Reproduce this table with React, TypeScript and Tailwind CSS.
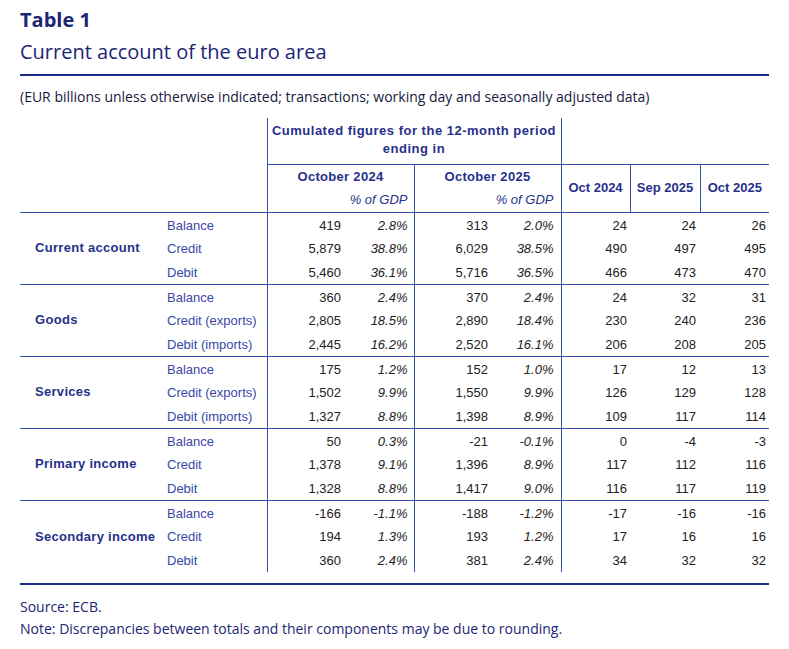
import React from "react";

type Row = [string, string, string, string, string, string, string, string];

const groups: { name: string; rows: Row[] }[] = [
  {
    name: "Current account",
    rows: [
      ["Balance", "419", "2.8%", "313", "2.0%", "24", "24", "26"],
      ["Credit", "5,879", "38.8%", "6,029", "38.5%", "490", "497", "495"],
      ["Debit", "5,460", "36.1%", "5,716", "36.5%", "466", "473", "470"],
    ],
  },
  {
    name: "Goods",
    rows: [
      ["Balance", "360", "2.4%", "370", "2.4%", "24", "32", "31"],
      ["Credit (exports)", "2,805", "18.5%", "2,890", "18.4%", "230", "240", "236"],
      ["Debit (imports)", "2,445", "16.2%", "2,520", "16.1%", "206", "208", "205"],
    ],
  },
  {
    name: "Services",
    rows: [
      ["Balance", "175", "1.2%", "152", "1.0%", "17", "12", "13"],
      ["Credit (exports)", "1,502", "9.9%", "1,550", "9.9%", "126", "129", "128"],
      ["Debit (imports)", "1,327", "8.8%", "1,398", "8.9%", "109", "117", "114"],
    ],
  },
  {
    name: "Primary income",
    rows: [
      ["Balance", "50", "0.3%", "-21", "-0.1%", "0", "-4", "-3"],
      ["Credit", "1,378", "9.1%", "1,396", "8.9%", "117", "112", "116"],
      ["Debit", "1,328", "8.8%", "1,417", "9.0%", "116", "117", "119"],
    ],
  },
  {
    name: "Secondary income",
    rows: [
      ["Balance", "-166", "-1.1%", "-188", "-1.2%", "-17", "-16", "-16"],
      ["Credit", "194", "1.3%", "193", "1.2%", "17", "16", "16"],
      ["Debit", "360", "2.4%", "381", "2.4%", "34", "32", "32"],
    ],
  },
];

const line = "border-[#3550a8]";

export default function App() {
  return (
    <div className="w-[789px] h-[649px] bg-white px-5 pt-[7px] font-['Open_Sans',sans-serif]">
      {/* Title */}
      <h1 className="text-[20px] leading-[26px] font-bold text-[#1c2674]">Table 1</h1>
      <h2 className="text-[20px] leading-[26px] mt-[6px] text-[#1c2674]">Current account of the euro area</h2>
      <div className="h-[2px] bg-[#1c2a8c] mt-[9px]" />
      <p className="text-[14px] leading-[18px] mt-[12px] text-[#161840]">
        (EUR billions unless otherwise indicated; transactions; working day and seasonally adjusted data)
      </p>

      {/* Table */}
      <table className="mt-[12px] w-[749px] table-fixed border-collapse font-['Liberation_Sans',Arial,sans-serif] text-[13px]">
        <colgroup>
          <col className="w-[140px]" />
          <col className="w-[107px]" />
          <col className="w-[78px]" />
          <col className="w-[69px]" />
          <col className="w-[78px]" />
          <col className="w-[69px]" />
          <col className="w-[69px]" />
          <col className="w-[70px]" />
          <col className="w-[69px]" />
        </colgroup>
        <thead className="font-bold text-[#27308a]">
          <tr className="h-[46px]">
            <th colSpan={2} />
            <th colSpan={4} className={`border-l border-r ${line} leading-[18px] px-1 pb-[2px] align-middle tracking-[0.5px]`}>
              Cumulated figures for the 12-month period
              <br />
              ending in
            </th>
            <th colSpan={3} />
          </tr>
          <tr className="h-[24px]">
            <th colSpan={2} />
            <th colSpan={2} className={`border-l border-t ${line} tracking-[0.3px]`}>October 2024</th>
            <th colSpan={2} className={`border-l border-t ${line} tracking-[0.3px]`}>October 2025</th>
            <th rowSpan={2} className={`border-l border-t ${line}`}>Oct 2024</th>
            <th rowSpan={2} className={`border-l border-t ${line}`}>Sep 2025</th>
            <th rowSpan={2} className={`border-l border-t ${line}`}>Oct 2025</th>
          </tr>
          <tr className={`h-[24px] border-b ${line}`}>
            <th colSpan={2} />
            <th colSpan={2} className={`border-l ${line} text-right pr-[6px] font-normal italic`}>% of GDP</th>
            <th colSpan={2} className={`border-l border-r ${line} text-right pr-[7px] font-normal italic`}>% of GDP</th>
          </tr>
        </thead>
        {groups.map((g, gi) => (
          <tbody key={g.name} className={gi < groups.length - 1 ? `border-b ${line}` : ""}>
            {g.rows.map((r, ri) => (
              <tr key={ri} className="h-[24px] text-[#222]">
                {ri === 0 && (
                  <td rowSpan={3} className="pl-[15px] font-bold text-[#27308a] whitespace-nowrap tracking-[0.3px]">
                    {g.name}
                  </td>
                )}
                <td className="pl-[7px] text-[#3a47a8] whitespace-nowrap pt-[2px]">{r[0]}</td>
                <td className={`border-l ${line} text-right pr-[4px] pt-[2px]`}>{r[1]}</td>
                <td className="text-right pr-[6px] italic pt-[2px]">{r[2]}</td>
                <td className={`border-l ${line} text-right pr-[4px] pt-[2px]`}>{r[3]}</td>
                <td className="text-right pr-[7px] italic pt-[2px]">{r[4]}</td>
                <td className={`border-l ${line} text-right pr-[3px] pt-[2px]`}>{r[5]}</td>
                <td className="text-right pr-[4px] pt-[2px]">{r[6]}</td>
                <td className="text-right pr-[3px] pt-[2px]">{r[7]}</td>
              </tr>
            ))}
          </tbody>
        ))}
      </table>
      <div className="h-[2px] bg-[#1c2a8c] mt-[11px]" />

      {/* Notes */}
      <div className="mt-[11px] text-[14px] leading-[22px] text-[#1c2674]">
        <p>Source: ECB.</p>
        <p>Note: Discrepancies between totals and their components may be due to rounding.</p>
      </div>
    </div>
  );
}
